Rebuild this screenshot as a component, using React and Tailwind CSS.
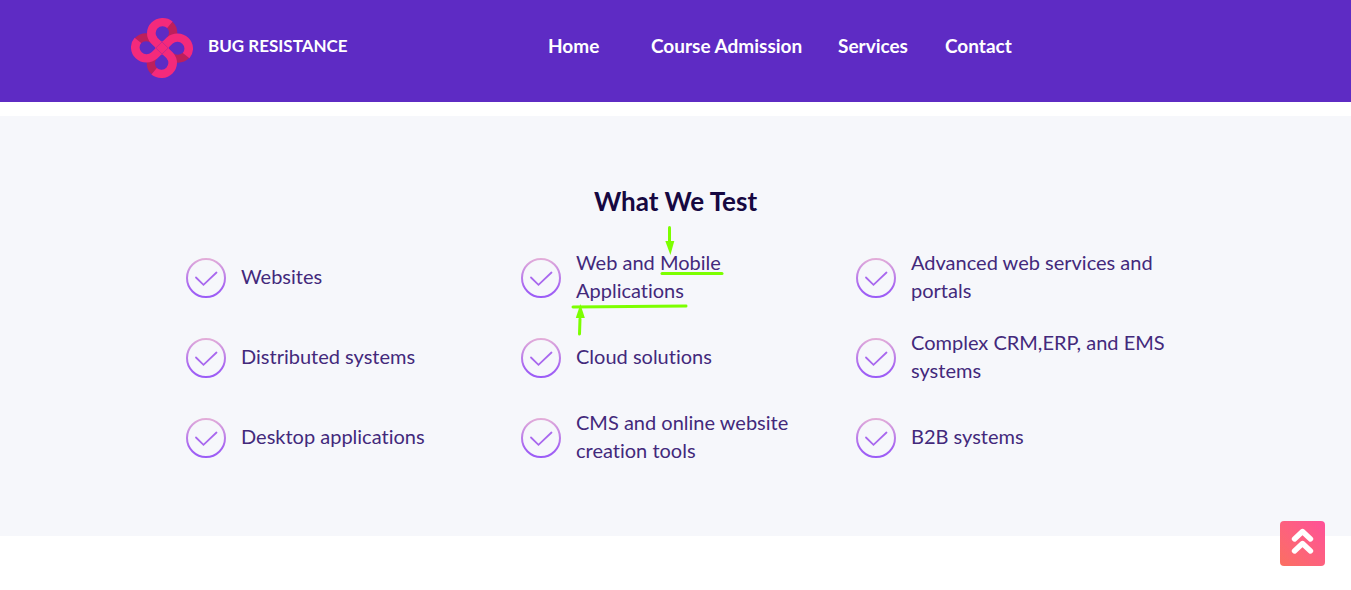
const items = [
  'Websites',
  'mobile',
  'Advanced web services and portals',
  'Distributed systems',
  'Cloud solutions',
  'Complex CRM,ERP, and EMS systems',
  'Desktop applications',
  'CMS and online website creation tools',
  'B2B systems',
];

function Logo() {
  const turns = [0, 90, 180, 270];
  return (
    <svg className="h-[62px] w-[62px] shrink-0" viewBox="-90 -93 180 186" preserveAspectRatio="none" fill="none" aria-hidden="true">
      {turns.map((t) => (
        <path key={t} transform={`rotate(${t})`} d="M22 -70 A33 33 0 0 1 23 -23" stroke="#bd1f5c" strokeWidth="24" />
      ))}
      {turns.map((t) => (
        <path key={t} transform={`rotate(${t})`} d="M12 12 L-23 -23 A33 33 0 0 1 23 -70" stroke="#f42a7b" strokeWidth="25" />
      ))}
      <path d="M0 -18 L18 0 L0 18 L-18 0 Z" stroke="#b02795" strokeWidth="2" />
    </svg>
  );
}

function Check() {
  return (
    <svg className="h-10 w-10 shrink-0" viewBox="0 0 40 40" fill="none" aria-hidden="true">
      <defs>
        <linearGradient id="ring" x1="0" y1="0" x2="0" y2="40" gradientUnits="userSpaceOnUse">
          <stop stopColor="#e4afd8" />
          <stop offset="0.75" stopColor="#a663f2" />
          <stop offset="1" stopColor="#9a5cf7" />
        </linearGradient>
      </defs>
      <circle cx="20" cy="20" r="19" stroke="url(#ring)" strokeWidth="2" />
      <path d="M10 19.5 L17.5 26.8 L30.5 14.5" stroke="#a968ee" strokeWidth="1.8" strokeLinecap="round" />
    </svg>
  );
}

function Marks() {
  return (
    <svg className="pointer-events-none absolute -top-[22px] -left-[5px] h-[112px] w-[156px]" viewBox="0 0 156 112" fill="none" stroke="#7cff00" strokeWidth="3" strokeLinecap="round" aria-hidden="true">
      <path d="M91 47.5 H151" />
      <path d="M2 81 L115 80" />
      <path d="M98.5 1.5 V18" />
      <path d="M94.3 15 H103.3 L99.4 29 Z" fill="#7cff00" stroke="none" />
      <path d="M8.5 108 L9 93" />
      <path d="M4.8 92 H13.8 L9.4 78 Z" fill="#7cff00" stroke="none" />
    </svg>
  );
}

export default function App() {
  return (
    <div className="min-h-screen bg-white font-['Lato','Open_Sans',sans-serif] [font-variant-ligatures:none]">
      <header className="bg-[#5e2bc4]">
        <div className="mx-auto flex max-w-[1089px] items-center pt-[17px] pb-[23px]">
          <a href="#home" className="flex w-[417px] shrink-0 items-center gap-[15px] text-[17px] font-bold text-white">
            <Logo />
            <span className="pb-1">BUG RESISTANCE</span>
          </a>
          <nav className="flex pb-1 text-[19px] leading-7 font-bold whitespace-nowrap text-white">
            <a href="#home" className="w-[103px]">Home</a>
            <a href="#courses" className="w-[187px]">Course Admission</a>
            <a href="#services" className="w-[107px]">Services</a>
            <a href="#contact">Contact</a>
          </nav>
        </div>
      </header>
      <main className="mt-[14px] bg-[#f6f7fb] pt-[67px] pb-[68px]">
        <h2 className="text-center text-[26px] leading-9 font-bold text-[#160841]">What We Test</h2>
        <ul className="mx-auto mt-[29px] grid max-w-[1005px] grid-cols-3 gap-y-5">
          {items.map((item) => (
            <li key={item} className="flex min-h-[60px] items-center gap-[15px] px-[13px]">
              <Check />
              {item === 'mobile' ? (
                <div className="relative pb-1 text-[20px] leading-7 text-[#43297b]">
                  Web and Mobile<br />Applications
                  <Marks />
                </div>
              ) : (
                <span className="pb-1 text-[20px] leading-7 text-[#43297b]">{item}</span>
              )}
            </li>
          ))}
        </ul>
      </main>
      <button aria-label="Back to top" className="fixed right-[26px] bottom-6 flex h-[45px] w-[45px] items-center justify-center rounded bg-linear-to-tr from-[#fb6f60] to-[#ff4f98]">
        <svg className="h-[45px] w-[45px]" viewBox="0 0 45 45" fill="none" stroke="#fff" strokeWidth="5.4" strokeLinecap="round" strokeLinejoin="round" aria-hidden="true">
          <path d="M14.5 18 L22.5 10.5 L30.5 18" />
          <path d="M14.5 30 L22.5 22.5 L30.5 30" />
        </svg>
      </button>
    </div>
  );
}
